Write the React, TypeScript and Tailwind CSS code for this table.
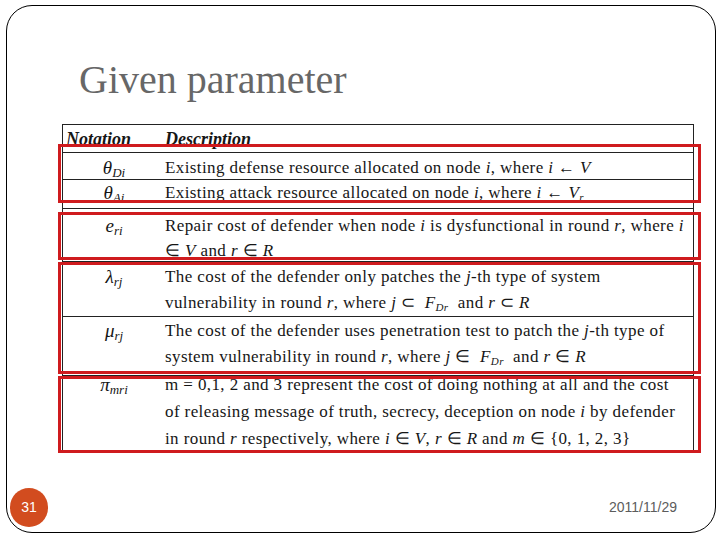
import React from "react";

type Row = {
  sym: React.ReactNode;
  lines: React.ReactNode[];
  h: string;
  pt: string;
  lh: string;
};

const Sym = ({ base, sub }: { base: string; sub: string }) => (
  <span className="italic text-[19px]">
    {base}
    <sub className="text-[13px] italic">{sub}</sub>
  </span>
);

const F = () => (
  <>
    &nbsp;<i>F</i>
    <sub className="text-[11px] italic">Dr</sub>&nbsp;
  </>
);

const rows: Row[] = [
  {
    sym: <Sym base="θ" sub="Di" />,
    lines: [
      <>Existing defense resource allocated on node <i>i</i>, where <i>i</i> ← <i>V</i></>,
    ],
    h: "h-[27px]",
    pt: "pt-[2px]",
    lh: "leading-[26px]",
  },
  {
    sym: <Sym base="θ" sub="Ai" />,
    lines: [
      <>
        Existing attack resource allocated on node <i>i</i>, where <i>i</i> ← <i>V</i>
        <sub className="text-[11px] italic">r</sub>
      </>,
    ],
    h: "h-[29px]",
    pt: "pt-0",
    lh: "leading-[26px]",
  },
  {
    sym: <Sym base="e" sub="ri" />,
    lines: [
      <>
        Repair cost of defender when node <i>i</i> is dysfunctional in round <i>r</i>, where <i>i</i>
      </>,
      <>
        ∈ <i>V</i> and <i>r</i> ∈ <i>R</i>
      </>,
    ],
    h: "h-[53px]",
    pt: "pt-[4px]",
    lh: "leading-[25px]",
  },
  {
    sym: <Sym base="λ" sub="rj" />,
    lines: [
      <>
        The cost of the defender only patches the <i>j</i>-th type of system
      </>,
      <>
        vulnerability in round <i>r</i>, where <i>j</i> ⊂ <F /> and <i>r</i> ⊂ <i>R</i>
      </>,
    ],
    h: "h-[55px]",
    pt: "pt-[2px]",
    lh: "leading-[26px]",
  },
  {
    sym: <Sym base="μ" sub="rj" />,
    lines: [
      <>
        The cost of the defender uses penetration test to patch the <i>j</i>-th type of
      </>,
      <>
        system vulnerability in round <i>r</i>, where <i>j</i> ∈ <F /> and <i>r</i> ∈ <i>R</i>
      </>,
    ],
    h: "h-[59px]",
    pt: "pt-[1px]",
    lh: "leading-[26px]",
  },
  {
    sym: <Sym base="π" sub="mri" />,
    lines: [
      <>m = 0,1, 2 and 3 represent the cost of doing nothing at all and the cost</>,
      <>
        of releasing message of truth, secrecy, deception on node <i>i</i> by defender
      </>,
      <>
        in round <i>r</i> respectively, where <i>i</i> ∈ <i>V</i>, <i>r</i> ∈ <i>R</i> and{" "}
        <i>m</i> ∈ {"{0, 1, 2, 3}"}
      </>,
    ],
    h: "h-[77px]",
    pt: "pt-0 -mt-[5px]",
    lh: "leading-[27px]",
  },
];

export default function App() {
  return (
    <div className="w-[720px] h-[540px] bg-white pt-[5px] pl-[6px] overflow-hidden">
      {/* slide frame */}
      <div className="relative w-[710px] h-[528px] border border-black rounded-[26px] flex flex-col font-['Liberation_Serif',serif]">
        <h1 className="mt-[51px] pl-[72px] text-[40px] leading-[46px] text-[#676767] font-normal">
          Given parameter
        </h1>

        {/* parameter table */}
        <div className="mt-[21px] ml-[55px] w-[632px] border border-[#222] text-[17px] tracking-[0.4px] text-[#161616]">
          <div className="flex h-[27px] pt-[1px] leading-[27px] text-[18px] tracking-normal font-bold italic">
            <div className="w-[102px] pl-[3px]">Notation</div>
            <div className="flex-1">Description</div>
          </div>
          {rows.map((r, i) => (
            <div key={i} className={`flex border-t border-[#222] ${r.h} ${r.lh}`}>
              <div className={`w-[102px] text-center tracking-normal ${r.pt}`}>{r.sym}</div>
              <div className={`flex-1 whitespace-nowrap ${r.pt}`}>
                {r.lines.map((l, j) => (
                  <div key={j}>{l}</div>
                ))}
              </div>
            </div>
          ))}
        </div>

        {/* highlight boxes */}
        <div className="absolute left-[51px] top-[138px] w-[643px] h-[59px] border-[3px] border-[#cf1b1e]" />
        <div className="absolute left-[51px] top-[206px] w-[643px] h-[48px] border-[3px] border-[#cf1b1e]" />
        <div className="absolute left-[51px] top-[256px] w-[643px] h-[112px] border-[3px] border-[#cf1b1e]" />
        <div className="absolute left-[51px] top-[370px] w-[643px] h-[77px] border-[3px] border-[#cf1b1e]" />

        {/* footer */}
        <div className="mt-[35px] flex items-center justify-between pl-[3px] pr-[38px] font-['Liberation_Sans',sans-serif]">
          <div className="w-[38px] h-[39px] rounded-full bg-[#d24c1f] flex items-center justify-center text-white text-[14px]">
            31
          </div>
          <div className="text-[14px] text-[#5c5c5c]">2011/11/29</div>
        </div>
      </div>
    </div>
  );
}
